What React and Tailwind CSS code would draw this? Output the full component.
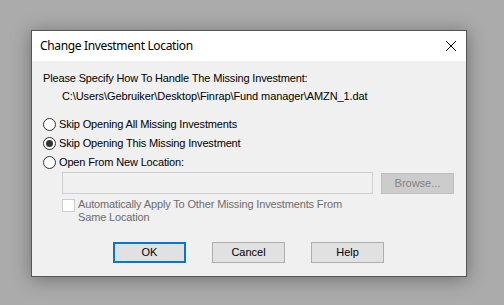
export default function App() {
  const body = { fontFamily: '"Liberation Sans", Arial, sans-serif' };
  const title = { fontFamily: '"Noto Sans", "Open Sans", sans-serif' };
  const Radio = ({ checked, label }) => (
    <div className="flex items-center h-[19px]">
      <div className="w-[13px] h-[13px] rounded-full border border-[#333] bg-white flex items-center justify-center">
        {checked && <div className="w-[7px] h-[7px] rounded-full bg-[#333]" />}
      </div>
      <span className="ml-[3px] text-[11px] tracking-[-0.15px] text-black">{label}</span>
    </div>
  );
  return (
    <div className="w-[504px] h-[305px] bg-[#ababab] pt-[30px] pl-[31px] overflow-hidden" style={body}>
      <div className="w-[436px] h-[247px] border border-[#555] bg-[#f0f0f0] shadow-[0_2px_18px_rgba(0,0,0,0.35)] flex flex-col">
        <div className="h-[30px] bg-white flex items-center justify-between pl-[8px] pr-[9px]">
          <span className="text-[12px] tracking-[-0.35px] text-black" style={title}>Change Investment Location</span>
          <svg width="12" height="12" viewBox="0 0 12 12">
            <path d="M1 1 L11 11 M11 1 L1 11" stroke="#000" strokeWidth="1" fill="none" />
          </svg>
        </div>
        <div className="flex flex-col pl-[11px] pt-[11px]">
          <div className="text-[11px] tracking-[-0.15px] leading-[13px] text-black">Please Specify How To Handle The Missing Investment:</div>
          <div className="text-[11px] tracking-[-0.1px] leading-[13px] text-black pl-[19px] mt-[5px]">C:\Users\Gebruiker\Desktop\Finrap\Fund manager\AMZN_1.dat</div>
          <div className="flex flex-col mt-[12px]">
            <Radio label="Skip Opening All Missing Investments" />
            <Radio checked label="Skip Opening This Missing Investment" />
            <Radio label="Open From New Location:" />
          </div>
          <div className="flex items-center pl-[19px]">
            <div className="w-[311px] h-[22px] border border-[#cfcfcf] bg-[#f0f0f0]" />
            <div className="ml-[8px] w-[73px] h-[21px] border border-[#bfbfbf] bg-[#cccccc] flex items-center justify-center text-[11px] text-[#838383]">Browse...</div>
          </div>
          <div className="flex items-start mt-[5px] pl-[19px]">
            <div className="w-[13px] h-[13px] border border-[#cccccc] bg-white shrink-0" />
            <div className="ml-[3px] text-[11px] tracking-[-0.15px] leading-[13px] text-[#6d6d6d] -mt-[1px]">
              Automatically Apply To Other Missing Investments From<br />Same Location
            </div>
          </div>
          <div className="flex mt-[18px] pl-[70px] gap-[26px]">
            <div className="w-[73px] h-[21px] border-2 border-[#0078d7] bg-[#e1e1e1] flex items-center justify-center text-[11px] text-black">OK</div>
            <div className="w-[73px] h-[21px] border border-[#adadad] bg-[#e1e1e1] flex items-center justify-center text-[11px] text-black">Cancel</div>
            <div className="w-[73px] h-[21px] border border-[#adadad] bg-[#e1e1e1] flex items-center justify-center text-[11px] text-black">Help</div>
          </div>
        </div>
      </div>
    </div>
  );
}
